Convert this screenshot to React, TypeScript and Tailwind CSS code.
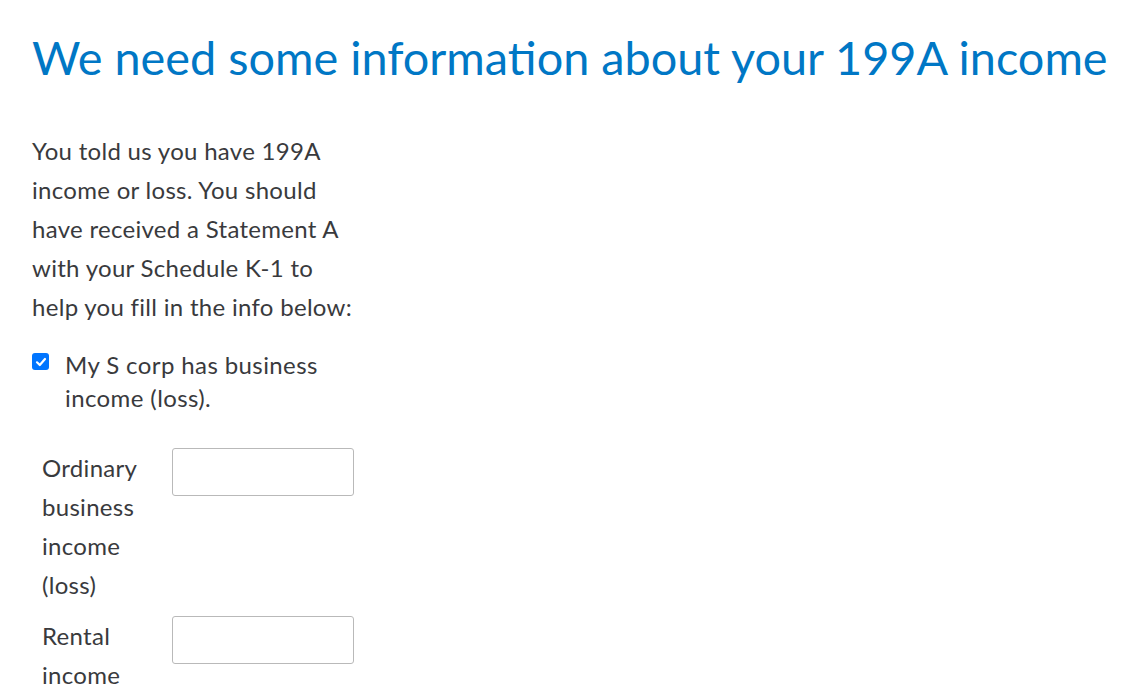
import React from "react";

const font = { fontFamily: '"Lato", "Noto Sans", sans-serif' };

export default function App() {
  return (
    <div className="min-h-screen bg-white pl-[32px] pt-[27px] text-[#393a3d]" style={font}>
      <h1 className="text-[46.8px] leading-[60px] text-[#0077c5] font-normal whitespace-nowrap">
        We need some information about your 199A income
      </h1>
      <p className="mt-[44px] w-[329px] text-[24px] leading-[39px] tracking-[0.3px]">
        You told us you have 199A income or loss. You should have received a Statement A with your Schedule K-1 to help you fill in the info below:
      </p>
      <div className="mt-[22px] flex items-start">
        <div className="mt-[5px] flex h-[17px] w-[17px] shrink-0 items-center justify-center rounded-[3px] bg-[#0075ff]">
          <svg width="12" height="12" viewBox="0 0 12 12" fill="none">
            <path d="M2 6.3 L4.8 9 L10 3" stroke="white" strokeWidth="2.2" strokeLinecap="round" strokeLinejoin="round" />
          </svg>
        </div>
        <label className="ml-[16px] w-[275px] text-[24px] leading-[33px] tracking-[0.4px]">
          My S corp has business income (loss).
        </label>
      </div>
      <div className="mt-[34px] ml-[10px] flex flex-col gap-[12px]">
        <div className="flex items-start">
          <div className="mr-[10px] w-[120px] text-[24px] leading-[39px] tracking-[0.3px]">Ordinary business income (loss)</div>
          <input className="h-[48px] w-[182px] rounded-[3px] border border-[#b9b9b9] bg-white" />
        </div>
        <div className="flex items-start">
          <div className="mr-[10px] w-[120px] text-[24px] leading-[39px] tracking-[0.3px]">Rental income</div>
          <input className="h-[48px] w-[182px] rounded-[3px] border border-[#b9b9b9] bg-white" />
        </div>
      </div>
    </div>
  );
}
